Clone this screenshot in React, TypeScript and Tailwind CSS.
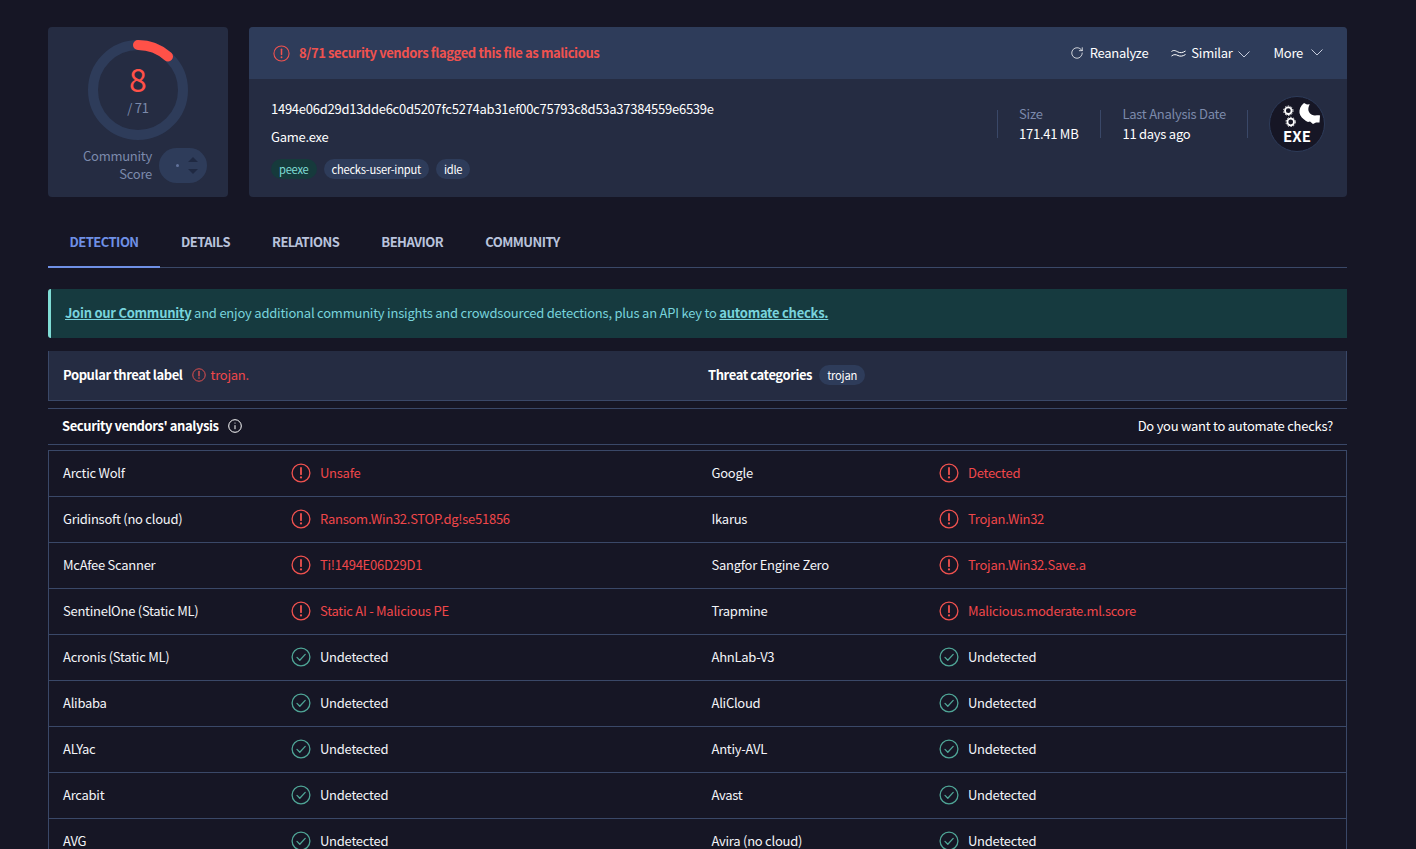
import { RotateCw } from "lucide-react"

const rows: [string, string, string, string][] = [
  ["Arctic Wolf", "Unsafe", "Google", "Detected"],
  ["Gridinsoft (no cloud)", "Ransom.Win32.STOP.dg!se51856", "Ikarus", "Trojan.Win32"],
  ["McAfee Scanner", "Ti!1494E06D29D1", "Sangfor Engine Zero", "Trojan.Win32.Save.a"],
  ["SentinelOne (Static ML)", "Static AI - Malicious PE", "Trapmine", "Malicious.moderate.ml.score"],
  ["Acronis (Static ML)", "Undetected", "AhnLab-V3", "Undetected"],
  ["Alibaba", "Undetected", "AliCloud", "Undetected"],
  ["ALYac", "Undetected", "Antiy-AVL", "Undetected"],
  ["Arcabit", "Undetected", "Avast", "Undetected"],
  ["AVG", "Undetected", "Avira (no cloud)", "Undetected"],
]

function AlertIcon({ size = 20 }: { size?: number }) {
  return (
    <svg width={size} height={size} viewBox="0 0 20 20" fill="none" className="shrink-0 text-[#f0524f]">
      <circle cx="10" cy="10" r="8.9" stroke="currentColor" strokeWidth="1.3" />
      <path d="M10 5v6.2" stroke="currentColor" strokeWidth="1.8" strokeLinecap="round" />
      <circle cx="10" cy="14.4" r="1.1" fill="currentColor" />
    </svg>
  )
}

function CheckIcon() {
  return (
    <svg width="20" height="20" viewBox="0 0 20 20" fill="none" className="shrink-0 text-[#4fa596]">
      <circle cx="10" cy="10" r="8.9" stroke="currentColor" strokeWidth="1.3" />
      <path d="M6 10.4l2.8 2.8L14.2 7.4" stroke="currentColor" strokeWidth="1.3" strokeLinecap="round" strokeLinejoin="round" />
    </svg>
  )
}

function Chevron({ className }: { className?: string }) {
  return (
    <svg width="12" height="7" viewBox="0 0 12 7" fill="none" stroke="#c5cbdb" strokeWidth="1" className={className}>
      <path d="M0.5 0.5L6 6l5.500-5.500" />
    </svg>
  )
}

function Verdict({ text }: { text: string }) {
  const clean = text === "Undetected"
  return (
    <div className="flex items-center gap-[9px]">
      {clean ? <CheckIcon /> : <AlertIcon />}
      <span className={clean ? "text-[#f3f4f8]" : "text-[#f0474a]"}>{text}</span>
    </div>
  )
}

function Gauge() {
  return (
    <div className="relative h-[100px] w-[100px]">
      <svg width="100" height="100" viewBox="0 0 100 100">
        <circle cx="50" cy="50" r="45" fill="none" stroke="#2e3c5a" strokeWidth="10" />
        <path d="M50 5A45 45 0 0 1 80 16.5" fill="none" stroke="#ff5148" strokeWidth="10" strokeLinecap="round" />
      </svg>
      <div className="absolute inset-0 flex flex-col items-center pt-[23px]">
        <span className="text-[32px] leading-[30px] tracking-normal text-[#ff5148]">8</span>
        <span className="mt-[6px] text-[13px] leading-[18px] text-[#7c8aab]">/ 71</span>
      </div>
    </div>
  )
}

function ExeLogo() {
  return (
    <div className="flex h-[56px] w-[56px] flex-col items-center rounded-full border border-[#2e3c5a] bg-[#161625]">
      <svg width="54" height="30" viewBox="0 0 54 30" fill="none" className="shrink-0">
        <circle cx="18.3" cy="13.7" r="3.300" stroke="#fff" strokeWidth="1.800" />
        <circle cx="18.3" cy="13.7" r="4.700" stroke="#fff" strokeWidth="1" strokeDasharray="1.500 1.500" />
        <circle cx="20.700" cy="25" r="3.300" stroke="#fff" strokeWidth="1.800" />
        <circle cx="20.700" cy="25" r="4.700" stroke="#fff" strokeWidth="1" strokeDasharray="1.500 1.500" />
        <path d="M34 6C30.500 9 29 12.500 29.500 16C30 19 33 22 36 24L38 25L40 24.500L43 27L46 25.500L49.500 25.500L50 18.500C48.500 18 47 18.500 45 18.500C40.500 18.500 37.500 14.500 38.500 10.500C38.800 9.300 39.200 8.300 39.800 7.300L37 7.500Z" fill="#fff" />
      </svg>
      <span className="text-[15px] font-bold leading-[18px] tracking-normal text-white">EXE</span>
    </div>
  )
}

export default function App() {
  return (
    <div
      className="h-[849px] overflow-hidden bg-[#161625] pl-[48px] pr-[69px] pt-[27px] text-[13px] tracking-[-0.02em] text-[#f3f4f8]"
      style={{ fontFamily: '"Noto Sans CJK SC", "Noto Sans", sans-serif' }}
    >
      <div className="flex h-[170px] gap-[21px]">
        <div className="flex w-[180px] flex-col items-center rounded-[4px] bg-[#252c42] pt-[13px]">
          <Gauge />
          <div className="ml-[14px] mt-[7px] flex items-center gap-[7px]">
            <div className="text-right leading-[18px] text-[#7c8aab]">
              Community
              <br />
              Score
            </div>
            <div className="flex h-[35px] w-[48px] items-center justify-between rounded-full bg-[#2e3c5a] pl-[17px] pr-[9px]">
              <span className="h-[3px] w-[3px] rounded-full bg-[#62739c]" />
              <div className="flex flex-col gap-[7px]">
                <span className="block h-0 w-0 border-x-[5px] border-b-[5px] border-x-transparent border-b-[#1f2942]" />
                <span className="block h-0 w-0 border-x-[5px] border-t-[5px] border-x-transparent border-t-[#1f2942]" />
              </div>
            </div>
          </div>
        </div>

        <div className="flex flex-1 flex-col overflow-hidden rounded-[4px] bg-[#252c42]">
          <div className="flex h-[52px] shrink-0 items-center justify-between bg-[#2e3c5a] pl-[24px] pr-[24px]">
            <div className="flex items-center gap-[9px]">
              <AlertIcon size={17} />
              <span className="font-semibold tracking-[-0.03em] text-[#f0524f]">8/71 security vendors flagged this file as malicious</span>
            </div>
            <div className="flex items-center text-white">
              <RotateCw className="h-[14px] w-[14px]" strokeWidth={1.3} />
              <span className="ml-[6px]">Reanalyze</span>
              <svg width="15" height="9" viewBox="0 0 15 9" fill="none" className="ml-[23px]" stroke="#fff" strokeWidth="1">
                <path d="M0.5 2.500c2.500-2 4.500-.5 6.500.5s4.500 1 7.500-1" />
                <path d="M0.5 7c2.500-2 4.500-1.500 6.500-.5s4.500 1 7.500-1" />
              </svg>
              <span className="ml-[5px]">Similar</span>
              <Chevron className="ml-[5px] mt-[3px]" />
              <span className="ml-[24px]">More</span>
              <Chevron className="ml-[8px] mt-[-1px]" />
            </div>
          </div>
          <div className="flex flex-1 justify-between pl-[22px] pr-[22px]">
            <div className="pt-[20px]">
              <div className="leading-[20px] text-white">1494e06d29d13dde6c0d5207fc5274ab31ef00c75793c8d53a37384559e6539e</div>
              <div className="mt-[8px] leading-[20px] text-white">Game.exe</div>
              <div className="mt-[12px] flex gap-[7px] text-[11.200px] leading-[20px]">
                <span className="rounded-full bg-[#163a3c] px-[8px] text-[#7fdcd5]">peexe</span>
                <span className="rounded-full bg-[#2e3c5a] px-[8px] text-white">checks-user-input</span>
                <span className="rounded-full bg-[#2e3c5a] px-[8px] text-white">idle</span>
              </div>
            </div>
            <div className="flex items-start pt-[17px]">
              <div className="mt-[14px] h-[28px] w-px bg-[#3a4868]" />
              <div className="ml-[21px] mr-[1px] mt-[8px] leading-[20px]">
                <div className="text-[#7c8aab]">Size</div>
                <div className="text-white">171.41 MB</div>
              </div>
              <div className="ml-[21px] mt-[14px] h-[28px] w-px bg-[#3a4868]" />
              <div className="ml-[21px] mt-[8px] leading-[20px]">
                <div className="text-[#7c8aab]">Last Analysis Date</div>
                <div className="text-white">11 days ago</div>
              </div>
              <div className="ml-[21px] mt-[14px] h-[28px] w-px bg-[#3a4868]" />
              <div className="ml-[21px]">
                <ExeLogo />
              </div>
            </div>
          </div>
        </div>
      </div>

      <div className="mt-[22px] flex h-[49px] items-stretch border-b border-[#3a4868] font-semibold tracking-[-0.04em] text-[#b9c3dc]">
        <div className="-mb-px flex w-[112px] items-center justify-center border-b-2 border-[#6f90e6] pb-[1px] text-[#6f90e6]">DETECTION</div>
        <div className="ml-[21px] flex items-center pb-[3px]">DETAILS</div>
        <div className="ml-[42px] flex items-center pb-[3px]">RELATIONS</div>
        <div className="ml-[42px] flex items-center pb-[3px]">BEHAVIOR</div>
        <div className="ml-[42px] flex items-center pb-[3px]">COMMUNITY</div>
      </div>

      <div className="mt-[21px] flex h-[49px] items-center rounded-l-[3px] border-l-[3px] border-[#7fdcd5] bg-[#163a3f] pb-[2px] pl-[14px] tracking-[-0.017em] text-[#78d3dc]">
        <span>
          <a className="font-bold tracking-[-0.02em] underline">Join our Community</a> and enjoy additional community insights and crowdsourced detections, plus an API key to <a className="font-bold tracking-[-0.02em] underline">automate checks.</a>
        </span>
      </div>

      <div className="mt-[13px] flex h-[50px] items-center border-x border-b border-[#3a4868] bg-[#252c42] pb-[2px]">
        <div className="flex w-[659px] items-center pl-[14px]">
          <span className="font-semibold tracking-[-0.032em] text-white">Popular threat label</span>
          <span className="ml-[9px]"><AlertIcon size={14} /></span>
          <span className="ml-[5px] text-[#f0474a]">trojan.</span>
        </div>
        <span className="font-semibold tracking-[-0.032em] text-white">Threat categories</span>
        <span className="ml-[7px] rounded-full bg-[#2e3c5a] px-[8px] text-[11.200px] leading-[20px] text-white">trojan</span>
      </div>

      <div className="mt-[7px] flex h-[37px] items-center justify-between border-y border-[#3a4868] px-[14px] pb-[2px] text-white">
        <div className="flex items-center gap-[9px]">
          <span className="font-semibold tracking-[-0.032em]">Security vendors' analysis</span>
          <svg width="14" height="14" viewBox="0 0 14 14" fill="none" stroke="#fff">
            <circle cx="7" cy="7" r="6.300" />
            <path d="M7 6.200v4" />
            <circle cx="7" cy="4" r=".6" fill="#fff" stroke="none" />
          </svg>
        </div>
        <span>Do you want to automate checks?</span>
      </div>

      <div className="mt-[5px] border border-[#3a4868]">
        {rows.map((r, i) => (
          <div
            key={r[0]}
            className={
              i === 0
                ? "grid h-[45px] grid-cols-[228px_420px_228px_1fr] items-center pb-[2px] pl-[14px]"
                : "grid h-[46px] grid-cols-[228px_420px_228px_1fr] items-center border-t border-[#3a4868] pb-[2px] pl-[14px]"
            }
          >
            <span>{r[0]}</span>
            <Verdict text={r[1]} />
            <span className="ml-[0.5px]">{r[2]}</span>
            <Verdict text={r[3]} />
          </div>
        ))}
      </div>
    </div>
  )
}
